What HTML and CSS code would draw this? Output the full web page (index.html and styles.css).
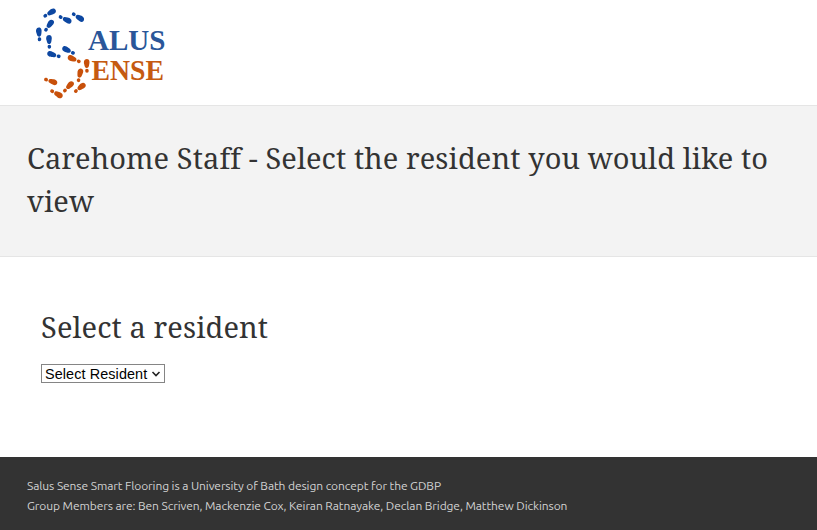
FILE: index.html
```html
<!DOCTYPE html>
<html lang="en">
<head>
<meta charset="utf-8">
<title>Salus Sense</title>
<link rel="stylesheet" href="styles.css">
</head>
<body>
<header class="site-header">
  <svg class="logo" width="140" height="105" viewBox="30 0 140 105" role="img" aria-label="Salus Sense">
    <defs>
      <g id="step">
        <path d="M-4.8-.4C-4.6-3-1.8-3.2.2-2.6 2-2.2 4.3-2.2 4.4 0 4.4 2 2.4 2.1.5 2.5-2 3.2-4.9 2.4-4.8-.4Z"/>
        <ellipse cx="7" cy="0" rx="2" ry="1.8"/>
      </g>
    </defs>
    <g class="blue">
      <use href="#step" transform="translate(51.3 12.2) rotate(149)"/>
      <use href="#step" transform="translate(67 20) rotate(205)"/>
      <use href="#step" transform="translate(79.7 18) rotate(212)"/>
      <use href="#step" transform="translate(50 24) rotate(125)"/>
      <use href="#step" transform="translate(38.9 32.3) rotate(85)"/>
      <use href="#step" transform="translate(49 39.7) rotate(87)"/>
      <use href="#step" transform="translate(51.9 54.5) rotate(15)"/>
      <use href="#step" transform="translate(66.7 49.7) rotate(27)"/>
    </g>
    <g class="orange">
      <use href="#step" transform="translate(72.3 58.7) rotate(22)"/>
      <use href="#step" transform="translate(86.7 63.7) rotate(88)"/>
      <use href="#step" transform="translate(80 73.3) rotate(102)"/>
      <use href="#step" transform="translate(52.7 81.7) rotate(198)"/>
      <use href="#step" transform="translate(69.7 85.3) rotate(133)"/>
      <use href="#step" transform="translate(81.3 86.7) rotate(141)"/>
      <use href="#step" transform="translate(58.3 94.5) rotate(208)"/>
    </g>
    <text class="word word-blue" x="88" y="49.7" textLength="77.5" lengthAdjust="spacingAndGlyphs">ALUS</text>
    <text class="word word-orange" x="91.5" y="79.7" textLength="72.5" lengthAdjust="spacingAndGlyphs">ENSE</text>
  </svg>
</header>
<section class="banner">
  <h1>Carehome Staff - Select the resident you would like to view</h1>
</section>
<main class="content">
  <h2>Select a resident</h2>
  <div class="picker">
    <select class="resident"><option>Select Resident</option></select>
    <svg class="chevron" width="10" height="8" viewBox="0 0 10 8" aria-hidden="true"><path d="M1.5 2 5 5.5 8.5 2"/></svg>
  </div>
</main>
<footer class="site-footer">
  <p>Salus Sense Smart Flooring is a University of Bath design concept for the GDBP</p>
  <p>Group Members are: Ben Scriven, Mackenzie Cox, Keiran Ratnayake, Declan Bridge, Matthew Dickinson</p>
</footer>
</body>
</html>
```
FILE: styles.css
```css
* { box-sizing: border-box; }
body {
  margin: 0;
  height: 530px;
  display: flex;
  flex-direction: column;
  overflow: hidden;
  background: #fff;
  color: #333;
}
.site-header { height: 105px; padding-left: 30px; }
.logo { display: block; }
.blue { fill: #0d47a1; }
.orange { fill: #c8500a; }
.word { font: bold 29px "Liberation Serif", serif; }
.word-blue { fill: #2a5699; }
.word-orange { fill: #c55a11; }
.banner {
  height: 152px;
  padding: 30px 27px 0;
  background: #f3f3f3;
  border-top: 1px solid #e5e5e5;
  border-bottom: 1px solid #e5e5e5;
}
h1, h2 {
  margin: 0;
  font: 400 29px/43px "Noto Serif", "Droid Serif", "DejaVu Serif", serif;
  letter-spacing: 0.1px;
}
.content { height: 200px; padding: 48px 41px 0; }
.picker { position: relative; width: 124px; margin-top: 16px; }
.resident {
  display: block;
  appearance: none;
  width: 124px;
  height: 19px;
  padding: 0 0 0 3px;
  border: 1px solid #858585;
  border-radius: 0;
  background-color: #fff;
  color: #000;
  font: 14.4px "Liberation Sans", Arial, sans-serif;
  letter-spacing: 0.1px;
}
.chevron {
  position: absolute;
  top: 6px;
  right: 4px;
  fill: none;
  stroke: #222;
  stroke-width: 1.6;
  pointer-events: none;
}
.site-footer {
  flex: 1;
  padding: 19px 27px 0;
  background: #333;
  color: #d2d2d2;
  font: 12px/20px Ubuntu, "Noto Sans", sans-serif;
  letter-spacing: -0.09px;
}
.site-footer p { margin: 0; white-space: nowrap; }
```
